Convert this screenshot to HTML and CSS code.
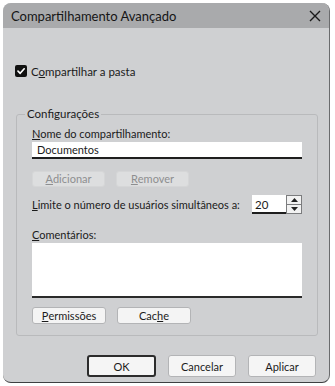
FILE: index.html
```html
<!DOCTYPE html>
<html lang="pt">
<head>
<meta charset="utf-8">
<link rel="stylesheet" href="styles.css">
</head>
<body>
<div class="window">
  <div class="titlebar">
    <span class="title">Compartilhamento Avançado</span>
    <svg class="close" width="12" height="12" viewBox="0 0 12 12"><path d="M1 1L11 11M11 1L1 11" stroke="#1a1a1a" stroke-width="1.4" fill="none"/></svg>
  </div>
  <div class="content">
    <div class="check-row">
      <span class="checkbox"><svg width="10" height="10" viewBox="0 0 10 10"><path d="M2 5.2L4.2 7.3L8.2 2.8" stroke="#fff" stroke-width="1.7" fill="none" stroke-linecap="round" stroke-linejoin="round"/></svg></span>
      <span>C<u>o</u>mpartilhar a pasta</span>
    </div>
    <fieldset class="group">
      <legend>Configurações</legend>
      <div class="label name-label"><u>N</u>ome do compartilhamento:</div>
      <div class="textbox">Documentos</div>
      <div class="btn-row">
        <span class="btn disabled"><u>A</u>dicionar</span>
        <span class="btn disabled"><u>R</u>emover</span>
      </div>
      <div class="limit-row">
        <span><u>L</u>imite o número de usuários simultâneos a:</span>
        <div class="spinner">
          <span class="spin-value">20</span>
          <span class="spin-btns">
            <span class="spin-up"><svg width="7" height="4" viewBox="0 0 7 4"><path d="M0 4L3.5 0L7 4Z" fill="#222"/></svg></span>
            <span class="spin-down"><svg width="7" height="4" viewBox="0 0 7 4"><path d="M0 0L3.5 4L7 0Z" fill="#222"/></svg></span>
          </span>
        </div>
      </div>
      <div class="label comments-label"><u>C</u>omentários:</div>
      <div class="textarea"></div>
      <div class="btn-row bottom-group-row">
        <span class="btn"><u>P</u>ermissões</span>
        <span class="btn">Cac<u>h</u>e</span>
      </div>
    </fieldset>
    <div class="dialog-buttons">
      <span class="dbtn default">OK</span>
      <span class="dbtn">Cancelar</span>
      <span class="dbtn">Aplicar</span>
    </div>
  </div>
</div>
</body>
</html>
```
FILE: styles.css
```css
* { box-sizing: border-box; }
html, body { margin: 0; padding: 0; background: #ffffff; }
body {
  font-family: Lato, "Open Sans", "Liberation Sans", sans-serif;
  font-size: 11px;
  color: #1b1b1b;
}
u { text-decoration: underline; text-underline-offset: 1px; text-decoration-thickness: 1px; }
.window {
  margin: 3px 0 0 3px;
  width: 327px;
  height: 380px;
  background: #cfd0d2;
  border-radius: 8px;
  border-right: 1px solid #6a6b6d;
  border-bottom: 1px solid #3e3f41;
  overflow: hidden;
  display: flex;
  flex-direction: column;
}
.titlebar {
  height: 25px;
  flex: none;
  background: #a9aaac;
  display: flex;
  align-items: center;
  justify-content: space-between;
  padding: 0 8px 0 8px;
}
.title { font-size: 13px; color: #151515; }
.content { flex: 1; display: flex; flex-direction: column; }
.check-row {
  display: flex;
  align-items: center;
  gap: 4px;
  margin: 36px 0 0 12px;
  height: 14px;
  font-size: 11.5px;
}
.checkbox {
  width: 12px; height: 12px;
  background: #111;
  border-radius: 2px;
  display: flex; align-items: center; justify-content: center;
}
.group {
  margin: 29px 11px 0 13px;
  padding: 0 15px 11px 15px;
  border: 1px solid #b9babc;
  border-radius: 3px;
  min-width: 0;
}
.group legend {
  padding: 0 2px;
  margin-left: -7px;
  font-size: 11.5px;
  line-height: 14px;
}
.label { height: 14px; line-height: 14px; margin-top: 5px; }
.name-label { margin-top: 6px; }
.textbox {
  margin-top: 1px;
  height: 17px;
  background: #fff;
  border-bottom: 2px solid #1e1e1e;
  padding: 1px 5px 0;
  line-height: 14px;
}
.btn-row { display: flex; gap: 11px; margin-top: 12px; }
.btn {
  width: 73px;
  height: 16px;
  background: #f4f4f4;
  border: 1px solid #b3b4b6;
  border-radius: 3px;
  display: flex; align-items: center; justify-content: center;
  line-height: 14px;
}
.btn.disabled { background: #dddedf; border-color: #d5d6d7; color: #8d8e90; }
.limit-row {
  display: flex;
  align-items: center;
  justify-content: space-between;
  margin-top: 8px;
  height: 19px;
}
.spinner { display: flex; height: 19px; }
.spin-value {
  width: 34px;
  background: #fff;
  border-bottom: 2px solid #1e1e1e;
  padding: 3px 0 0 3px;
  line-height: 14px;
  font-size: 11.5px;
}
.spin-btns {
  width: 16px;
  display: flex; flex-direction: column;
  border: 1px solid #7b7c7e;
  background: #f2f2f2;
}
.spin-up, .spin-down { flex: 1; display: flex; align-items: center; justify-content: center; }
.spin-up { border-bottom: 1px solid #7b7c7e; }
.comments-label { margin-top: 14px; }
.textarea {
  margin-top: 1px;
  height: 55px;
  background: #fff;
  border-bottom: 2px solid #2a2a2a;
}
.bottom-group-row { margin-top: 9px; }
.bottom-group-row .btn { height: 17px; width: 74px; }
.dialog-buttons {
  display: flex;
  justify-content: flex-end;
  gap: 12px;
  margin: 19px 13px 0 0;
}
.dbtn {
  width: 68px;
  height: 22px;
  background: #f5f5f5;
  border: 1px solid #b3b4b6;
  border-radius: 3px;
  display: flex; align-items: center; justify-content: center;
}
.dbtn.default { width: 69px; border: 2px solid #2c2c2c; }
```
